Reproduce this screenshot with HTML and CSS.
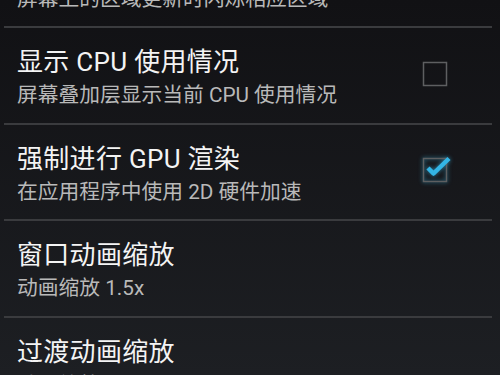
FILE: index.html
```html
<!DOCTYPE html>
<html lang="zh-CN">
<head>
    <meta charset="UTF-8">
    <meta name="viewport" content="width=device-width, initial-scale=1.0">
    <title>开发者选项</title>
    <link rel="stylesheet" href="styles.css">
</head>
<body>
    <div class="pref-list">
        <!-- 上一项，只露出副标题 -->
        <div class="pref">
            <div class="pref-text">
                <div class="pref-title">显示屏幕更新</div>
                <div class="pref-summary">屏幕上的区域更新时闪烁相应区域</div>
            </div>
            <svg class="check" width="32" height="32" viewBox="0 0 32 32">
                <rect x="4.5" y="4.5" width="23" height="23" fill="none" stroke="#5e5f61" stroke-width="1.5"/>
            </svg>
        </div>
        <div class="divider"></div>

        <div class="pref">
            <div class="pref-text">
                <div class="pref-title">显示 CPU 使用情况</div>
                <div class="pref-summary">屏幕叠加层显示当前 CPU 使用情况</div>
            </div>
            <svg class="check" width="32" height="32" viewBox="0 0 32 32">
                <rect x="4.5" y="4.5" width="23" height="23" fill="none" stroke="#5e5f61" stroke-width="1.5"/>
            </svg>
        </div>
        <div class="divider"></div>

        <div class="pref">
            <div class="pref-text">
                <div class="pref-title">强制进行 GPU 渲染</div>
                <div class="pref-summary">在应用程序中使用 2D 硬件加速</div>
            </div>
            <svg class="check checked" width="32" height="32" viewBox="0 0 32 32">
                <rect x="4.5" y="4.5" width="23" height="23" fill="none" stroke="#5e5f61" stroke-width="1.5"/>
                <polyline points="9,14 14.5,19.5 30,4.5" fill="none" stroke="#33b5e5" stroke-width="4.5" stroke-linejoin="round"/>
            </svg>
        </div>
        <div class="divider"></div>

        <div class="pref">
            <div class="pref-text">
                <div class="pref-title">窗口动画缩放</div>
                <div class="pref-summary">动画缩放 1.5x</div>
            </div>
        </div>
        <div class="divider"></div>

        <div class="pref">
            <div class="pref-text">
                <div class="pref-title">过渡动画缩放</div>
                <div class="pref-summary">动画缩放 1.5x</div>
            </div>
        </div>
    </div>
</body>
</html>
```

FILE: styles.css
```css
html, body { height: 100%; }
body {
    margin: 0;
    overflow: hidden;
    background: linear-gradient(#111114, #1d1f23);
    font-family: Roboto, "Noto Sans CJK SC", sans-serif;
    color: #f2f2f2;
}

.pref-list { margin-top: -68.5px; }

.pref {
    height: 94.5px;
    box-sizing: border-box;
    display: flex;
    align-items: center;
    padding: 4px 49px 0 17px;
}

.pref-text { flex: 1; }

.pref-title {
    font-size: 26px;
    line-height: 32px;
    letter-spacing: 0.3px;
    color: #f4f4f4;
}

.pref-summary {
    margin-top: 4px;
    font-size: 20.75px;
    line-height: 26px;
    color: #b9b9b9;
}

.check { flex: none; margin-top: -7px; }
.check.checked { filter: drop-shadow(0 0 2px rgba(51, 181, 229, 0.7)); }

.divider {
    height: 2px;
    margin: 0 8px 0 4px;
    background: #3a3b3e;
}
```
